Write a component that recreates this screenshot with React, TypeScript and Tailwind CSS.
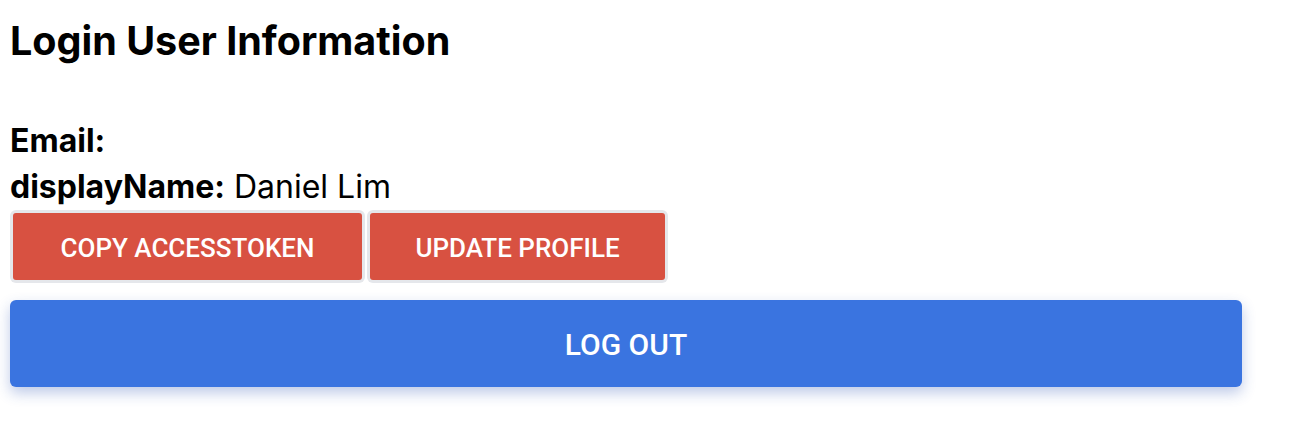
import React from 'react';

const user = {
  email: '',
  displayName: 'Daniel Lim',
};

const ActionButton: React.FC<{ label: string; width: string }> = ({ label, width }) => (
  <div className={`rounded-[6px] bg-[#e5e7eb] p-[3px] ${width}`}>
    <button className="flex h-[67px] w-full items-center justify-center rounded-[3px] bg-[#d85141] pt-[4px] text-[26px] font-medium uppercase text-white">
      {label}
    </button>
  </div>
);

export default function App() {
  return (
    <div className="min-h-[440px] bg-white px-[10px] pt-[17px] font-['Inter','Roboto',sans-serif] text-black">
      <h1 className="text-[39.5px] font-bold leading-[48px]">Login User Information</h1>

      <div className="mt-[52px] text-[32px] leading-[47px]">
        <p>
          <span className="font-bold">Email:</span> {user.email}
        </p>
        <p className="-mt-[1px]">
          <span className="font-bold">displayName:</span> {user.displayName}
        </p>
      </div>

      <div className="mt-0 flex gap-[2px] font-['Roboto',sans-serif]">
        <ActionButton label="Copy accessToken" width="w-[355px]" />
        <ActionButton label="Update profile" width="w-[301px]" />
      </div>

      <button className="mt-[17px] flex h-[87px] w-[1232px] items-center justify-center rounded-[6px] bg-[#3a74e0] pt-[2px] font-['Roboto',sans-serif] text-[30px] font-medium uppercase text-white shadow-[0_6px_14px_rgba(40,80,180,0.3)]">
        Log out
      </button>
    </div>
  );
}
